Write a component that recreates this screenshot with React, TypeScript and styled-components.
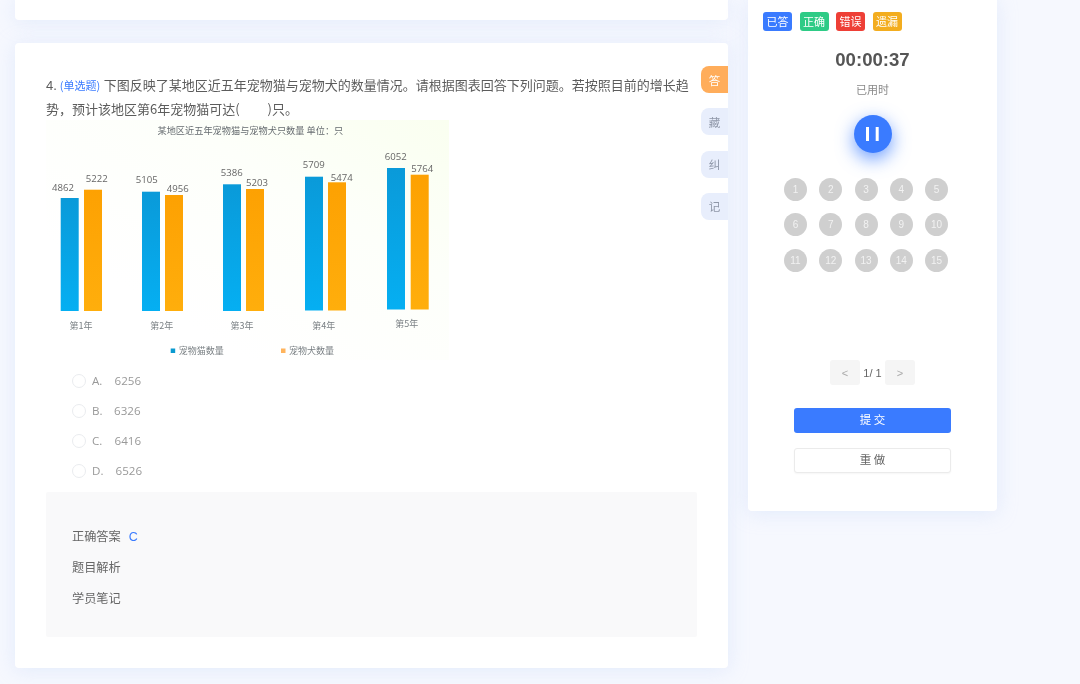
import React from 'react';
import styled, { createGlobalStyle } from 'styled-components';

const GlobalStyle = createGlobalStyle`
  html, body {
    margin: 0;
    padding: 0;
    background: #f6f8fe;
  }
  * {
    box-sizing: border-box;
  }
`;

const years = [
  { label: '第1年', labelX: 81, labelY: 329, bottom: 311, cat: { v: 4862, x: 60.7, top: 198, tx: 63, ty: 191 }, dog: { v: 5222, x: 84, top: 189.7, tx: 96.7, ty: 182 } },
  { label: '第2年', labelX: 161.7, labelY: 329, bottom: 311, cat: { v: 5105, x: 142, top: 191.7, tx: 146.7, ty: 182.5 }, dog: { v: 4956, x: 165, top: 195, tx: 177.7, ty: 191.5 } },
  { label: '第3年', labelX: 242, labelY: 329, bottom: 311, cat: { v: 5386, x: 223, top: 184.3, tx: 231.7, ty: 176.2 }, dog: { v: 5203, x: 246, top: 189, tx: 257, ty: 186.2 } },
  { label: '第4年', labelX: 323.7, labelY: 329, bottom: 310.5, cat: { v: 5709, x: 305, top: 176.7, tx: 313.7, ty: 168 }, dog: { v: 5474, x: 328, top: 182.3, tx: 341.7, ty: 180.5 } },
  { label: '第5年', labelX: 406.7, labelY: 327, bottom: 309.5, cat: { v: 6052, x: 387, top: 168, tx: 395.7, ty: 159.5 }, dog: { v: 5764, x: 410.7, top: 174.7, tx: 422.3, ty: 171.5 } },
];

const options = [
  { key: 'A.', value: '6256', shift: 0 },
  { key: 'B.', value: '6326', shift: -0.5 },
  { key: 'C.', value: '6416', shift: 0 },
  { key: 'D.', value: '6526', shift: 1 },
];

const tabs = ['答', '藏', '纠', '记'];

const legends = [
  { text: '已答', color: '#3a7bff' },
  { text: '正确', color: '#2ecb86' },
  { text: '错误', color: '#ee3f36' },
  { text: '遗漏', color: '#f3ad1f' },
];

const BarChart = () => (
  <ChartFrame viewBox="46 120 403 240" width={403} height={240}>
    <defs>
      <linearGradient id="paper" x1="1" y1="0" x2="0.25" y2="0.75">
        <stop offset="0" stopColor="#fafff0" />
        <stop offset="0.45" stopColor="#fdfffa" />
        <stop offset="1" stopColor="#ffffff" />
      </linearGradient>
      <linearGradient id="catBar" x1="0" y1="0" x2="0" y2="1">
        <stop offset="0" stopColor="#0a9ad9" />
        <stop offset="1" stopColor="#05aff2" />
      </linearGradient>
      <linearGradient id="dogBar" x1="0" y1="0" x2="0" y2="1">
        <stop offset="0" stopColor="#fda102" />
        <stop offset="1" stopColor="#ffae0c" />
      </linearGradient>
    </defs>
    <rect x={46} y={120} width={403} height={240} fill="url(#paper)" />
    <ChartTitle x={157.5} y={133.5}>某地区近五年宠物猫与宠物犬只数量 单位：只</ChartTitle>
    {years.map((y) => (
      <g key={y.label}>
        <rect x={y.cat.x} y={y.cat.top} width={18} height={y.bottom - y.cat.top} fill="url(#catBar)" />
        <rect x={y.dog.x} y={y.dog.top} width={18} height={y.bottom - y.dog.top} fill="url(#dogBar)" />
        <BarValue x={y.cat.tx} y={y.cat.ty} textAnchor="middle">{y.cat.v}</BarValue>
        <BarValue x={y.dog.tx} y={y.dog.ty} textAnchor="middle">{y.dog.v}</BarValue>
        <AxisLabel x={y.labelX} y={y.labelY} textAnchor="middle">{y.label}</AxisLabel>
      </g>
    ))}
    <rect x={170.7} y={348.5} width={4.5} height={4.5} fill="#0a9ad0" />
    <AxisLabel x={178.7} y={354}>宠物猫数量</AxisLabel>
    <rect x={281} y={348.5} width={4.5} height={4.5} fill="#ffb45c" />
    <AxisLabel x={289} y={354}>宠物犬数量</AxisLabel>
  </ChartFrame>
);

const PauseIcon = () => (
  <svg width="13" height="14" viewBox="0 0 13 14" fill="#fff">
    <rect x="0" y="0" width="3" height="14" />
    <rect x="9.7" y="0" width="3" height="14" />
  </svg>
);

export default function App() {
  return (
    <Page>
      <GlobalStyle />
      <MainColumn>
        <PrevCard />
        <QuestionCard>
          <QuestionText>
            <QuestionNo>4.</QuestionNo>
            <QuestionType>(单选题)</QuestionType>
            <span>下图反映了某地区近五年宠物猫与宠物犬的数量情况。请根据图表回答下列问题。若按照目前的增长趋势，预计该地区第6年宠物猫可达(</span>
            <BlankGap />
            <span>)只。</span>
          </QuestionText>
          <BarChart />
          <OptionList>
            {options.map((o) => (
              <OptionRow key={o.key}>
                <Radio />
                <OptionKey>{o.key}</OptionKey>
                <OptionValue $shift={o.shift}>{o.value}</OptionValue>
              </OptionRow>
            ))}
          </OptionList>
          <AnswerBox>
            <AnswerRow>
              <span>正确答案</span>
              <AnswerValue>C</AnswerValue>
            </AnswerRow>
            <AnswerRow>题目解析</AnswerRow>
            <AnswerRow>学员笔记</AnswerRow>
          </AnswerBox>
          <TabStack>
            {tabs.map((t, i) => (
              <SideTab key={t} $active={i === 0}>{t}</SideTab>
            ))}
          </TabStack>
        </QuestionCard>
      </MainColumn>

      <SideCard>
        <LegendRow>
          {legends.map((l) => (
            <LegendBadge key={l.text} $color={l.color}>{l.text}</LegendBadge>
          ))}
        </LegendRow>
        <Timer>00:00:37</Timer>
        <TimerLabel>已用时</TimerLabel>
        <PauseButton>
          <PauseIcon />
        </PauseButton>
        <NumberGrid>
          {Array.from({ length: 15 }, (_, i) => (
            <NumberDot key={i}>{i + 1}</NumberDot>
          ))}
        </NumberGrid>
        <Pager>
          <PagerButton>&lt;</PagerButton>
          <PagerText>1/ 1</PagerText>
          <PagerButton>&gt;</PagerButton>
        </Pager>
        <SubmitButton>提 交</SubmitButton>
        <RedoButton>重 做</RedoButton>
      </SideCard>
    </Page>
  );
}

const Page = styled.div`
  width: 1080px;
  height: 684px;
  overflow: hidden;
  display: flex;
  align-items: flex-start;
  column-gap: 20px;
  padding-left: 15px;
  background: #f6f8fe;
  font-family: "Noto Sans CJK SC", "Liberation Sans", sans-serif;
  filter: blur(0.4px);
`;

const MainColumn = styled.div`
  width: 713px;
  display: flex;
  flex-direction: column;
  row-gap: 23px;
`;

const PrevCard = styled.div`
  height: 20px;
  background: #fff;
  box-shadow: 0 2px 20px rgba(190, 208, 245, 0.35);
  border-radius: 0 0 4px 4px;
`;

const QuestionCard = styled.div`
  position: relative;
  height: 625px;
  padding: 30px 31px 0;
  background: #fff;
  border-radius: 4px;
  box-shadow: 0 2px 20px rgba(190, 208, 245, 0.35);
`;

const QuestionText = styled.div`
  font-size: 13px;
  line-height: 23px;
  color: #5c5c5c;
  height: 46.5px;
`;

const QuestionNo = styled.span`
  font-family: "Liberation Sans", sans-serif;
  margin-right: 3px;
`;

const QuestionType = styled.span`
  font-size: 11px;
  color: #3a7bff;
  margin-right: 3.5px;
`;

const BlankGap = styled.span`
  display: inline-block;
  width: 28px;
`;

const ChartFrame = styled.svg`
  display: block;
  filter: blur(0.4px);
`;

const ChartTitle = styled.text`
  font-size: 9.2px;
  fill: #666c70;
`;

const BarValue = styled.text`
  font-family: "Open Sans", sans-serif;
  font-size: 9.6px;
  fill: #666;
`;

const AxisLabel = styled.text`
  font-size: 9px;
  fill: #7a8084;
`;

const OptionList = styled.div`
  margin-top: 6px;
  padding-left: 26px;
`;

const OptionRow = styled.div`
  height: 30px;
  display: flex;
  align-items: center;
  font-family: "Open Sans", sans-serif;
  font-size: 11.6px;
  color: #999;
`;

const Radio = styled.span`
  width: 14px;
  height: 14px;
  border: 1px solid #eaecef;
  border-radius: 50%;
  background: #fff;
  margin-right: 6px;
`;

const OptionKey = styled.span`
  width: 22.5px;
  flex: none;
`;

const OptionValue = styled.span<{ $shift: number }>`
  margin-left: ${({ $shift }) => $shift}px;
`;

const AnswerBox = styled.div`
  margin-top: 6px;
  height: 145px;
  padding: 29px 26px 0;
  background: #f9f9fa;
  border-radius: 2px;
`;

const AnswerRow = styled.div`
  height: 31px;
  line-height: 31px;
  font-size: 12.2px;
  color: #666;
`;

const AnswerValue = styled.span`
  margin-left: 8px;
  font-family: "Liberation Sans", sans-serif;
  font-size: 12.5px;
  color: #3a7bff;
`;

const TabStack = styled.div`
  position: absolute;
  top: 23px;
  right: 0;
  display: flex;
  flex-direction: column;
  row-gap: 15.3px;
`;

const SideTab = styled.div<{ $active: boolean }>`
  width: 27px;
  height: 27px;
  display: flex;
  align-items: center;
  justify-content: center;
  border-radius: 8px 0 0 8px;
  font-size: 11.5px;
  color: ${({ $active }) => ($active ? '#fff' : '#8f97a8')};
  background: ${({ $active }) => ($active ? '#ffad5b' : '#e8eefc')};
`;

const SideCard = styled.div`
  width: 249px;
  height: 511px;
  display: flex;
  flex-direction: column;
  align-items: center;
  padding-top: 12px;
  background: #fff;
  border-radius: 0 0 4px 4px;
  box-shadow: 0 2px 20px rgba(190, 208, 245, 0.35);
`;

const LegendRow = styled.div`
  align-self: flex-start;
  display: flex;
  column-gap: 7.5px;
  padding-left: 15px;
`;

const LegendBadge = styled.span<{ $color: string }>`
  width: 29px;
  height: 19px;
  padding-bottom: 2px;
  display: flex;
  align-items: center;
  justify-content: center;
  border-radius: 3px;
  font-size: 11px;
  color: #fff;
  background: ${({ $color }) => $color};
`;

const Timer = styled.div`
  margin-top: 18px;
  height: 22px;
  line-height: 22px;
  font-family: "Liberation Sans", sans-serif;
  font-size: 18.6px;
  font-weight: 700;
  color: #555;
`;

const TimerLabel = styled.div`
  margin-top: 11px;
  height: 16px;
  line-height: 15px;
  font-size: 11px;
  color: #888;
`;

const PauseButton = styled.div`
  margin-top: 17px;
  width: 38px;
  height: 38px;
  flex: none;
  display: flex;
  align-items: center;
  justify-content: center;
  border-radius: 50%;
  background: #3a7bff;
  box-shadow: 0 6px 18px rgba(58, 123, 255, 0.75);
`;

const NumberGrid = styled.div`
  align-self: flex-start;
  margin: 24.5px 0 0 36px;
  display: grid;
  grid-template-columns: repeat(5, 23px);
  column-gap: 12.25px;
  row-gap: 12.5px;
`;

const NumberDot = styled.span`
  width: 23px;
  height: 23px;
  display: flex;
  align-items: center;
  justify-content: center;
  border-radius: 50%;
  background: #cfcfcf;
  font-family: "Liberation Sans", sans-serif;
  font-size: 10px;
  color: #f2f2f2;
`;

const Pager = styled.div`
  margin-top: 88.5px;
  display: flex;
  align-items: center;
  height: 25px;
`;

const PagerButton = styled.span`
  width: 30px;
  height: 25px;
  display: flex;
  align-items: center;
  justify-content: center;
  border-radius: 3px;
  background: #f5f5f5;
  font-family: "Liberation Sans", sans-serif;
  font-size: 11px;
  color: #aaa;
`;

const PagerText = styled.span`
  width: 25px;
  text-align: center;
  font-family: "Liberation Sans", sans-serif;
  font-size: 11px;
  color: #666;
`;

const SubmitButton = styled.div`
  margin-top: 23px;
  width: 157.5px;
  height: 24.5px;
  padding-bottom: 2px;
  display: flex;
  align-items: center;
  justify-content: center;
  border-radius: 3px;
  background: #3a7bff;
  font-size: 11.5px;
  color: #fff;
`;

const RedoButton = styled.div`
  margin-top: 15.5px;
  width: 157.5px;
  height: 24.5px;
  padding-bottom: 2px;
  display: flex;
  align-items: center;
  justify-content: center;
  border: 1px solid #ebebeb;
  border-radius: 3px;
  background: #fff;
  box-shadow: 0 1px 2px rgba(0, 0, 0, 0.04);
  font-size: 11.5px;
  color: #666;
`;
